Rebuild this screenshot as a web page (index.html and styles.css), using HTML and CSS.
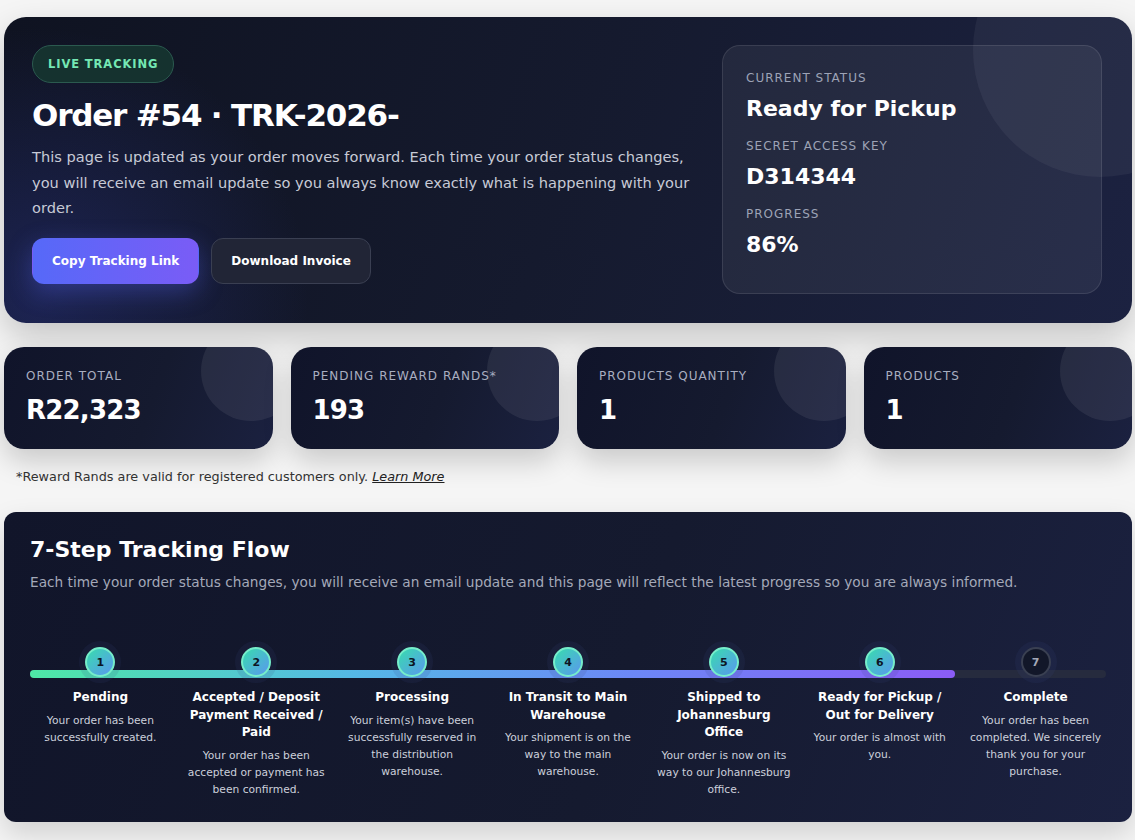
FILE: index.html
```html
<!DOCTYPE html>
<html lang="en">
<head>
  <meta charset="UTF-8" />
  <title>Order #54 - Live Tracking</title>
  <link rel="stylesheet" href="styles.css">
</head>
<body>
  <div class="page">

    <section class="hero">
      <div class="hero-main">
        <span class="badge">LIVE TRACKING</span>
        <h1 class="hero-title">Order #54 · TRK-2026-</h1>
        <p class="hero-text">
          This page is updated as your order moves forward. Each time your order status changes,
          you will receive an email update so you always know exactly what is happening with your order.
        </p>
        <div class="hero-actions">
          <button class="btn btn-primary">Copy Tracking Link</button>
          <button class="btn btn-secondary">Download Invoice</button>
        </div>
      </div>

      <div class="status-panel">
        <div class="status-item">
          <div class="status-label">CURRENT STATUS</div>
          <div class="status-value">Ready for Pickup</div>
        </div>
        <div class="status-item">
          <div class="status-label">SECRET ACCESS KEY</div>
          <div class="status-value">D314344</div>
        </div>
        <div class="status-item">
          <div class="status-label">PROGRESS</div>
          <div class="status-value">86%</div>
        </div>
      </div>
    </section>

    <div class="stats">
      <div class="stat-card">
        <div class="stat-label">ORDER TOTAL</div>
        <div class="stat-value">R22,323</div>
      </div>
      <div class="stat-card">
        <div class="stat-label">PENDING REWARD RANDS*</div>
        <div class="stat-value">193</div>
      </div>
      <div class="stat-card">
        <div class="stat-label">PRODUCTS QUANTITY</div>
        <div class="stat-value">1</div>
      </div>
      <div class="stat-card">
        <div class="stat-label">PRODUCTS</div>
        <div class="stat-value">1</div>
      </div>
    </div>

    <p class="footnote">*Reward Rands are valid for registered customers only. <a href="#" class="learn-more">Learn More</a></p>

    <section class="flow">
      <h2 class="flow-title">7-Step Tracking Flow</h2>
      <p class="flow-text">Each time your order status changes, you will receive an email update and this page will reflect the latest progress so you are always informed.</p>

      <div class="steps">
        <div class="track"><div class="track-fill" style="width: 86%"></div></div>
        <div class="step-list">
          <div class="step done">
            <div class="step-dot">1</div>
            <div class="step-title">Pending</div>
            <div class="step-desc">Your order has been successfully created.</div>
          </div>
          <div class="step done">
            <div class="step-dot">2</div>
            <div class="step-title">Accepted / Deposit Payment Received / Paid</div>
            <div class="step-desc">Your order has been accepted or payment has been confirmed.</div>
          </div>
          <div class="step done">
            <div class="step-dot">3</div>
            <div class="step-title">Processing</div>
            <div class="step-desc">Your item(s) have been successfully reserved in the distribution warehouse.</div>
          </div>
          <div class="step done">
            <div class="step-dot">4</div>
            <div class="step-title">In Transit to Main Warehouse</div>
            <div class="step-desc">Your shipment is on the way to the main warehouse.</div>
          </div>
          <div class="step done">
            <div class="step-dot">5</div>
            <div class="step-title">Shipped to Johannesburg Office</div>
            <div class="step-desc">Your order is now on its way to our Johannesburg office.</div>
          </div>
          <div class="step done">
            <div class="step-dot">6</div>
            <div class="step-title">Ready for Pickup / Out for Delivery</div>
            <div class="step-desc">Your order is almost with you.</div>
          </div>
          <div class="step">
            <div class="step-dot">7</div>
            <div class="step-title">Complete</div>
            <div class="step-desc">Your order has been completed. We sincerely thank you for your purchase.</div>
          </div>
        </div>
      </div>
    </section>

  </div>
</body>
</html>
```

FILE: styles.css
```css
body {
  margin: 0;
  background: #f5f5f5;
  font-family: 'DejaVu Sans', sans-serif;
  color: #fff;
}

.page {
  padding: 17px 3px 18px 4px;
}

/* hero */

.hero {
  position: relative;
  overflow: hidden;
  display: grid;
  grid-template-columns: 1fr 380px;
  gap: 24px;
  padding: 28px 30px 29px 28px;
  border-radius: 22px;
  background:
    radial-gradient(circle at 3% 92%, rgba(52, 64, 170, 0.35), transparent 24%),
    linear-gradient(110deg, #0f1321 0%, #151a2e 50%, #1c2241 100%);
  box-shadow: 0 14px 34px rgba(0, 0, 0, 0.2);
}

.hero::before {
  content: '';
  position: absolute;
  width: 254px;
  height: 254px;
  top: -94px;
  right: -95px;
  border-radius: 50%;
  background: rgba(255, 255, 255, 0.05);
}

.hero-main,
.status-panel {
  position: relative;
}

.badge {
  display: inline-flex;
  align-items: center;
  height: 36px;
  padding: 0 15px;
  border-radius: 19px;
  background: #15322f;
  border: 1px solid #2b5a4f;
  color: #74e8b4;
  font-size: 11.5px;
  font-weight: bold;
  letter-spacing: 0.9px;
}

.hero-title {
  margin: 13px 0 0;
  font-size: 31px;
  line-height: 38px;
  letter-spacing: -1.2px;
  font-weight: bold;
}

.hero-text {
  margin: 10px 0 0;
  font-size: 14.6px;
  line-height: 25.5px;
  color: #c7cad6;
}

.hero-actions {
  display: flex;
  gap: 12px;
  margin-top: 17px;
}

.btn {
  height: 46px;
  padding: 0 19px;
  border-radius: 12px;
  font-family: 'DejaVu Sans', sans-serif;
  font-size: 12px;
  font-weight: bold;
  color: #fff;
  cursor: pointer;
}

.btn-primary {
  border: 1px solid transparent;
  background: linear-gradient(90deg, #5669f8, #7a5cf6);
  box-shadow: 0 8px 24px rgba(86, 100, 240, 0.35);
}

.btn-secondary {
  border: 1px solid #3a3f52;
  background: #212536;
}

.status-panel {
  padding: 24px 23px 19px;
  border-radius: 18px;
  background: rgba(255, 255, 255, 0.06);
  border: 1px solid rgba(255, 255, 255, 0.1);
}

.status-item {
  margin-bottom: 14px;
}

.status-label {
  font-size: 12px;
  line-height: 16px;
  letter-spacing: 1px;
  color: #9da3b6;
  margin-bottom: 8px;
}

.status-value {
  font-size: 22px;
  line-height: 30px;
  font-weight: bold;
}

/* stats */

.stats {
  display: grid;
  grid-template-columns: repeat(4, 1fr);
  gap: 18px;
  margin-top: 24px;
}

.stat-card {
  position: relative;
  overflow: hidden;
  height: 102px;
  box-sizing: border-box;
  padding: 21px 22px 0;
  border-radius: 20px;
  background: linear-gradient(110deg, #10142a 0%, #151a2f 55%, #1b2140 100%);
  box-shadow: 0 12px 28px rgba(0, 0, 0, 0.18);
}

.stat-card::before {
  content: '';
  position: absolute;
  width: 100px;
  height: 100px;
  top: -26px;
  right: -28px;
  border-radius: 50%;
  background: rgba(255, 255, 255, 0.07);
}

.stat-label {
  position: relative;
  font-size: 12px;
  line-height: 16px;
  letter-spacing: 1px;
  color: #a9aec0;
}

.stat-value {
  position: relative;
  margin-top: 10px;
  font-size: 26px;
  line-height: 32px;
  letter-spacing: -0.8px;
  font-weight: bold;
}

.footnote {
  margin: 19px 0 0 12px;
  font-size: 12.8px;
  line-height: 18px;
  color: #333;
}

.learn-more {
  color: #222;
  font-style: italic;
}

/* flow */

.flow {
  margin-top: 26px;
  padding: 24px 26px 24px;
  border-radius: 12px;
  background: linear-gradient(110deg, #11152a 0%, #151a2f 55%, #1b2140 100%);
  box-shadow: 0 12px 28px rgba(0, 0, 0, 0.15);
}

.flow-title {
  margin: 0;
  font-size: 22px;
  line-height: 28px;
  font-weight: bold;
}

.flow-text {
  margin: 8px 0 0;
  font-size: 13.7px;
  line-height: 20px;
  color: #a4a9b9;
}

.steps {
  position: relative;
  margin-top: 55px;
}

.track {
  position: absolute;
  left: 0;
  right: 0;
  top: 23px;
  height: 8px;
  border-radius: 4px;
  background: #262b3e;
}

.track-fill {
  height: 100%;
  border-radius: 4px;
  background: linear-gradient(90deg, #4ee8a6 0%, #55b8e6 35%, #6c88f6 65%, #8b5cf6 100%);
}

.step-list {
  position: relative;
  display: grid;
  grid-template-columns: repeat(7, 1fr);
  column-gap: 15px;
}

.step {
  display: flex;
  flex-direction: column;
  align-items: center;
  text-align: center;
}

.step-dot {
  width: 30px;
  height: 30px;
  box-sizing: border-box;
  display: flex;
  align-items: center;
  justify-content: center;
  border-radius: 50%;
  border: 2px solid #3a4052;
  background: #121729;
  box-shadow: 0 0 0 6px rgba(60, 70, 130, 0.14);
  font-size: 11px;
  font-weight: bold;
  color: #a3a8b8;
  margin-bottom: 12px;
}

.step.done .step-dot {
  border-color: #76edca;
  background: linear-gradient(135deg, #38dcae, #5a97ef);
  color: #0d1424;
}

.step-title {
  max-width: 136px;
  font-size: 12px;
  line-height: 17.5px;
  font-weight: bold;
  margin-bottom: 5px;
}

.step-desc {
  font-size: 10.7px;
  line-height: 17px;
  color: #ccd0db;
}
```
